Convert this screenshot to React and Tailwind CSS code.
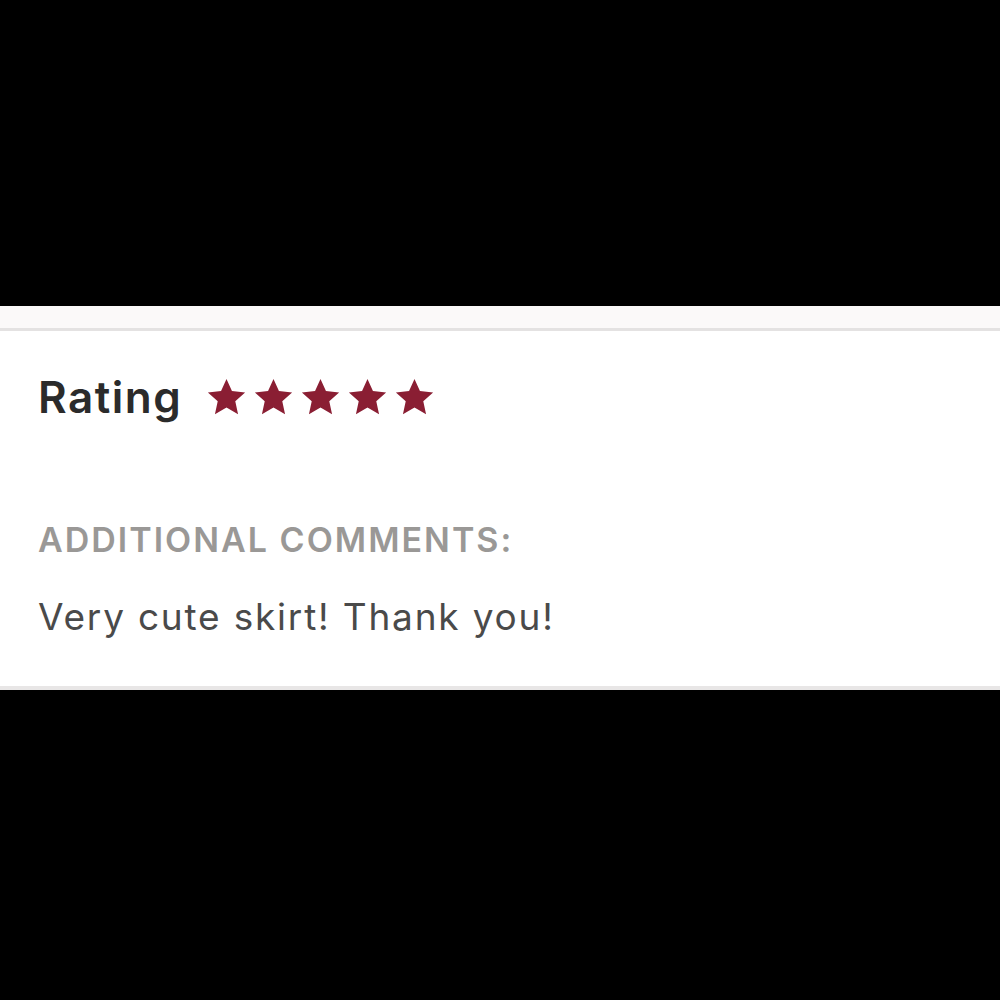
export default function App() {
  const Star = () => (
    <svg viewBox="0 0 24 24" className="w-[39px] h-[39px]" fill="#8a1e33">
      <path d="M12 0.6l3.35 7.45 8.1.85-6.05 5.45 1.72 7.95L12 18.2l-7.12 4.1 1.72-7.95L.55 8.9l8.1-.85z" />
    </svg>
  );
  return (
    <div className="w-[1000px] h-[1000px] bg-black flex flex-col" style={{ fontFamily: 'Inter, Lato, sans-serif' }}>
      <div className="h-[306px] shrink-0" />
      <div className="h-[22px] shrink-0 bg-[#fbf9f9] border-b-[3px] border-[#e4e2e2] box-content" />
      <div className="h-[355px] shrink-0 bg-white border-b-[4px] border-[#e8e6e6] box-content pl-[38px] flex flex-col">
        <div className="flex items-center mt-[44px] h-[44px]">
          <span className="text-[44px] leading-none font-semibold tracking-[1.5px] text-[#2b2b2b]">Rating</span>
          <div className="flex ml-[25px] gap-[8px]">
            <Star />
            <Star />
            <Star />
            <Star />
            <Star />
          </div>
        </div>
        <div className="mt-[104px] text-[34px] leading-none font-semibold tracking-[2px] text-[#9a9896] uppercase">
          Additional comments:
        </div>
        <div className="mt-[41px] text-[37px] leading-none tracking-[1.8px] text-[#4a4a4a]">
          Very cute skirt! Thank you!
        </div>
      </div>
    </div>
  );
}
